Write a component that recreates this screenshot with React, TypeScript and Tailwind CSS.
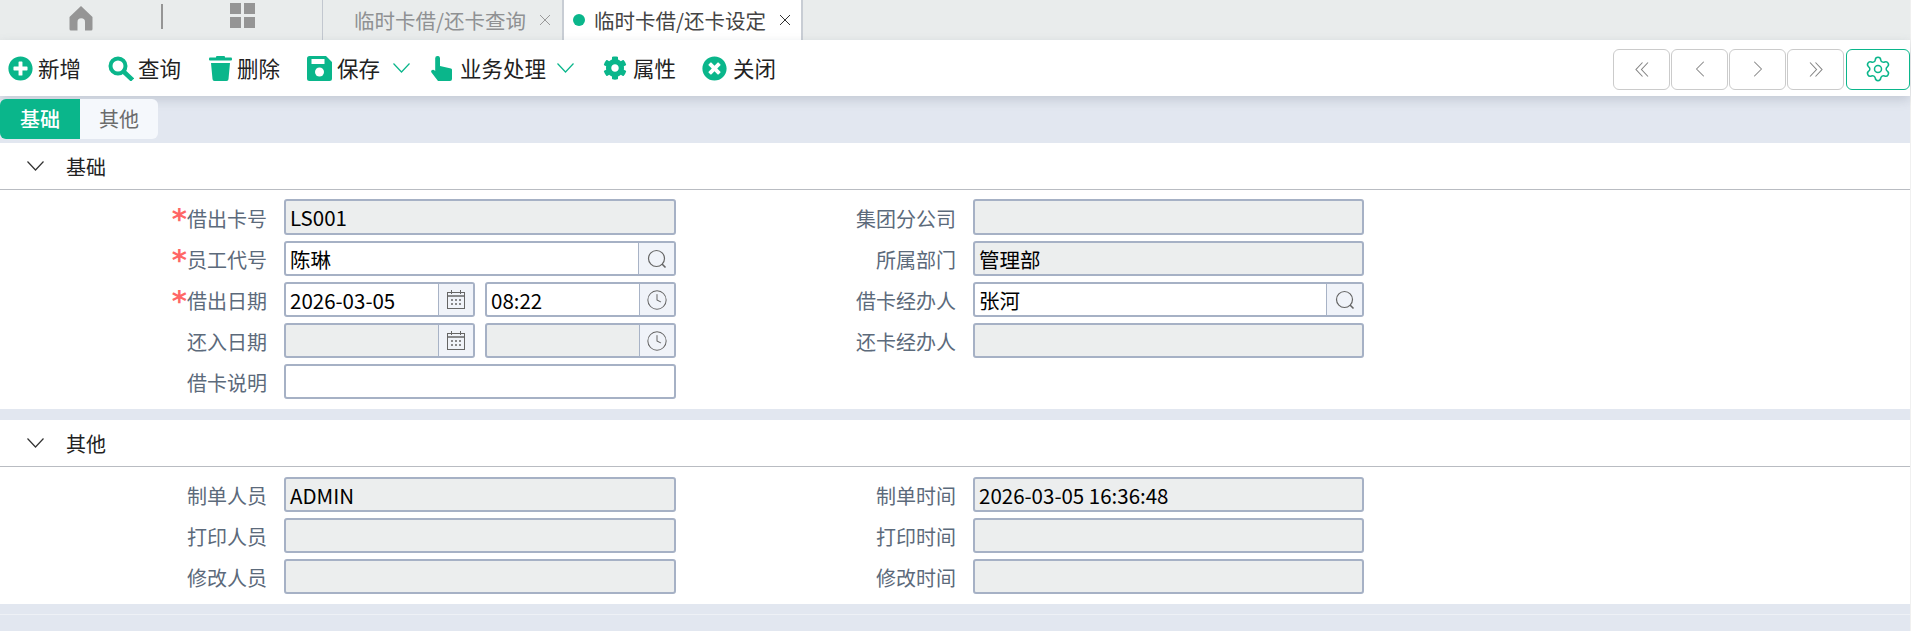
import { ChevronLeft, ChevronRight, Clock, Settings } from 'lucide-react';
import type { ReactNode } from 'react';
import { FaCog, FaPlusCircle, FaTimesCircle } from 'react-icons/fa';

function HomeIcon() {
    return (
        <svg width="24" height="26" viewBox="0 0 24 26" fill="#959595">
            <path d="M12 1 L23.5 12 V24 a1.5 1.5 0 0 1 -1.5 1.5 H16 V17 a3.5 3.5 0 0 0 -7.5 0 V25.5 H2 a1.5 1.5 0 0 1 -1.5 -1.5 V12 Z" />
        </svg>
    );
}

function GridIcon() {
    return (
        <svg width="25" height="25" viewBox="0 0 25 25" fill="#959595">
            <rect x="0" y="0" width="11" height="11" />
            <rect x="14" y="0" width="11" height="11" />
            <rect x="0" y="14" width="11" height="11" />
            <rect x="14" y="14" width="11" height="11" />
        </svg>
    );
}

function SearchIcon() {
    return (
        <svg width="26" height="25" viewBox="0 0 26 25" fill="none" stroke="#0ab68b" strokeWidth="4">
            <circle cx="10" cy="10" r="7.5" />
            <path d="M15.5 15.5 L24.5 24" strokeWidth="4.5" />
        </svg>
    );
}

function TrashIcon() {
    return (
        <svg width="23" height="25" viewBox="0 0 23 25" fill="#0ab68b">
            <rect x="0" y="1.5" width="23" height="3" rx="1" />
            <rect x="7" y="0" width="9" height="3" rx="1" />
            <path d="M2 7 H21 L19.5 23 a2 2 0 0 1 -2 2 H5.5 a2 2 0 0 1 -2 -2 Z" />
        </svg>
    );
}

function SaveIcon() {
    return (
        <svg width="25" height="25" viewBox="0 0 25 25">
            <path d="M2.5 0 H19 L25 6 V22.5 a2.5 2.5 0 0 1 -2.5 2.5 H2.5 a2.5 2.5 0 0 1 -2.5 -2.5 V2.5 a2.5 2.5 0 0 1 2.5 -2.5 Z" fill="#0ab68b" />
            <rect x="4.5" y="3" width="13" height="5" fill="#fff" />
            <circle cx="12.5" cy="16" r="4.5" fill="#fff" />
        </svg>
    );
}

function HandIcon() {
    return (
        <svg width="21" height="25" viewBox="0 0 21 25" fill="#0ab68b">
            <path d="M6.5 0 a2.3 2.3 0 0 1 2.5 2.3 V10 L20 12.5 a1.5 1.5 0 0 1 1 1.5 V23 a2 2 0 0 1 -2 2 H7 L0.5 16.5 a1.8 1.8 0 0 1 2.5 -2.5 L4.2 15 V2.3 A2.3 2.3 0 0 1 6.5 0 Z" />
        </svg>
    );
}

function SmallChevron({ color = '#0ab68b' }: { color?: string }) {
    return (
        <svg width="17" height="10" viewBox="0 0 17 10" fill="none" stroke={color} strokeWidth="1.2">
            <path d="M0.5 0.5 L8.5 9 L16.5 0.5" />
        </svg>
    );
}

function DoubleChevron({ flip }: { flip?: boolean }) {
    return (
        <svg width="14" height="15" viewBox="0 0 14 15" fill="none" stroke="currentColor" strokeWidth="1.1" className={flip ? 'rotate-180' : ''}>
            <path d="M7.5 0.5 L1 7.5 L7.5 14.5 M13 0.5 L6.5 7.5 L13 14.5" />
        </svg>
    );
}

function LookupIcon() {
    return (
        <svg width="20" height="20" viewBox="0 0 20 20" fill="none" stroke="#666" strokeWidth="1.2">
            <circle cx="9.5" cy="9.5" r="8" />
            <path d="M15 15 L18.5 18.5" strokeWidth="1.6" />
        </svg>
    );
}

function CalendarIcon() {
    return (
        <svg width="18" height="19" viewBox="0 0 18 19" fill="none" stroke="#666" strokeWidth="1">
            <rect x="0.5" y="2.5" width="17" height="16" />
            <path d="M0.5 6 H17.5" strokeWidth="1.6" />
            <path d="M4.5 0 V4 M13.5 0 V4" />
            <path d="M4 10 H6 M8 10 H10 M12 10 H14 M4 14 H6 M8 14 H10 M12 14 H14" strokeWidth="1.4" />
        </svg>
    );
}

function Addon({ children, className }: { children: ReactNode; className: string }) {
    return (
        <div className={`flex h-full shrink-0 items-center justify-center border-l border-[#a8b3c6] bg-[#f0f3f9] ${className}`}>
            {children}
        </div>
    );
}

function Field({ value, disabled, className, addon }: { value?: string; disabled?: boolean; className: string; addon?: ReactNode }) {
    return (
        <div className={`flex h-full items-center overflow-hidden rounded-[3px] border-2 border-[#a6b1c5] ${disabled ? 'bg-[#eceeee]' : 'bg-white'} ${className}`}>
            <div className="min-w-0 flex-1 pt-px pl-[4px] text-[20.5px] leading-none text-black">{value}</div>
            {addon}
        </div>
    );
}

function Label({ text, required, className }: { text: string; required?: boolean; className: string }) {
    return (
        <div className={`flex shrink-0 items-center justify-end pt-[3px] text-[20px] text-[#5c6a7b] ${className}`}>
            <span className="relative">
                {required && <span className="absolute top-[-3px] right-full font-['DejaVu_Sans',sans-serif] text-[29px] leading-[36px] font-bold text-[#ff6666]">*</span>}
                {text}
            </span>
        </div>
    );
}

function SectionHead({ title }: { title: string }) {
    return (
        <div className="flex h-[47px] items-center border-b border-[#b9bcc2] pl-[27px] text-[20px] text-[#222]">
            <SmallChevron color="#333" />
            <span className="ml-[22px] pt-px">{title}</span>
        </div>
    );
}

function NavButton({ children }: { children: ReactNode }) {
    return (
        <div className="flex h-[41px] w-[57px] items-center justify-center rounded-[6px] border border-[#cbcbcb] bg-white text-[#858585]">
            {children}
        </div>
    );
}

export default function App() {
    return (
        <div className="h-[631px] w-full overflow-hidden bg-[#f0f0f0] pr-px font-['Noto_Sans_CJK_SC',sans-serif]">
            <div className="h-full bg-[#e2e7f0]">
                {/* Tab bar */}
                <div className="flex h-[40px] items-stretch bg-[#e9ecec]">
                    <div className="flex w-[161px] items-center justify-center pb-[4px]">
                        <HomeIcon />
                    </div>
                    <div className="mt-[4px] h-[25px] w-[2px] bg-[#959595]" />
                    <div className="flex w-[159px] items-center justify-center pb-[9px]">
                        <GridIcon />
                    </div>
                    <div className="flex w-[240px] items-center border-l border-[#c2c7cf] pl-[31px] text-[20.5px] text-[#8f9193]">
                        <span>临时卡借/还卡查询</span>
                        <span className="ml-[13px] text-[#9a9a9a]">
                            <svg width="12" height="12" viewBox="0 0 12 12" stroke="currentColor" strokeWidth="1"><path d="M1 1 L11 11 M11 1 L1 11" /></svg>
                        </span>
                    </div>
                    <div className="flex w-[241px] items-center border-x-2 border-x-[#c8cdd4] bg-white pl-[9px] text-[20.5px] text-[#444]">
                        <span className="h-[12px] w-[12px] rounded-full bg-[#0ab68b]" />
                        <span className="ml-[9px]">临时卡借/还卡设定</span>
                        <span className="ml-[13px] text-[#333]">
                            <svg width="12" height="12" viewBox="0 0 12 12" stroke="currentColor" strokeWidth="1"><path d="M1 1 L11 11 M11 1 L1 11" /></svg>
                        </span>
                    </div>
                </div>

                {/* Toolbar */}
                <div className="relative z-10 flex h-[56px] items-center bg-white pl-[8px] text-[21.5px] text-[#222] shadow-[0_4px_10px_rgba(90,100,120,0.22)]">
                    <div className="flex items-center gap-[5px]"><FaPlusCircle size={25} color="#0ab68b" />新增</div>
                    <div className="ml-[27px] flex items-center gap-[4px]"><SearchIcon />查询</div>
                    <div className="ml-[28px] flex items-center gap-[5px]"><TrashIcon />删除</div>
                    <div className="ml-[27px] flex items-center gap-[5px]"><SaveIcon />保存</div>
                    <div className="ml-[13px]"><SmallChevron /></div>
                    <div className="ml-[21px] flex items-center gap-[8px]"><HandIcon />业务处理</div>
                    <div className="ml-[11px]"><SmallChevron /></div>
                    <div className="ml-[29px] flex items-center gap-[6px]"><FaCog size={24} color="#0ab68b" />属性</div>
                    <div className="ml-[26px] flex items-center gap-[6px]"><FaTimesCircle size={25} color="#0ab68b" />关闭</div>

                    <div className="mt-[2px] ml-auto flex items-center gap-[1px]">
                        <NavButton><DoubleChevron /></NavButton>
                        <NavButton><ChevronLeft size={28} strokeWidth={0.9} /></NavButton>
                        <NavButton><ChevronRight size={28} strokeWidth={0.9} /></NavButton>
                        <NavButton><DoubleChevron flip /></NavButton>
                        <div className="ml-[1px] flex h-[41px] w-[64px] items-center justify-center rounded-[6px] border border-[#0ab68b] bg-white text-[#0ab68b]">
                            <Settings size={28} strokeWidth={1.3} />
                        </div>
                    </div>
                </div>

                {/* Sub tabs */}
                <div className="relative z-20 flex h-[47px] pt-[3px] text-[20px]">
                    <div className="flex h-[40px] w-[80px] items-center justify-center rounded-l-[6px] bg-[#0ab68b] font-medium text-white">基础</div>
                    <div className="flex h-[40px] w-[78px] items-center justify-center rounded-r-[6px] bg-[#f5f8fc] text-[#6b6b6b]">其他</div>
                </div>

                {/* 基础 */}
                <div className="bg-white">
                    <SectionHead title="基础" />
                    <div className="flex flex-col gap-[6px] pt-[9px] pb-[10px]">
                        <div className="flex h-[36px]">
                            <Label text="借出卡号" required className="w-[267px]" />
                            <Field value="LS001" disabled className="ml-[17px] w-[392px]" />
                            <Label text="集团分公司" className="w-[280px]" />
                            <Field disabled className="ml-[17px] w-[391px]" />
                        </div>
                        <div className="flex h-[35px]">
                            <Label text="员工代号" required className="w-[267px]" />
                            <Field value="陈琳" className="ml-[17px] w-[392px]" addon={<Addon className="w-[36px]"><LookupIcon /></Addon>} />
                            <Label text="所属部门" className="w-[280px]" />
                            <Field value="管理部" disabled className="ml-[17px] w-[391px]" />
                        </div>
                        <div className="flex h-[35px]">
                            <Label text="借出日期" required className="w-[267px]" />
                            <Field value="2026-03-05" className="ml-[17px] w-[191px]" addon={<Addon className="w-[35px]"><CalendarIcon /></Addon>} />
                            <Field value="08:22" className="ml-[10px] w-[191px]" addon={<Addon className="w-[35px]"><Clock size={22} strokeWidth={1.1} color="#666" /></Addon>} />
                            <Label text="借卡经办人" className="w-[280px]" />
                            <Field value="张河" className="ml-[17px] w-[391px]" addon={<Addon className="w-[36px]"><LookupIcon /></Addon>} />
                        </div>
                        <div className="flex h-[35px]">
                            <Label text="还入日期" className="w-[267px]" />
                            <Field disabled className="ml-[17px] w-[191px]" addon={<Addon className="w-[35px]"><CalendarIcon /></Addon>} />
                            <Field disabled className="ml-[10px] w-[191px]" addon={<Addon className="w-[35px]"><Clock size={22} strokeWidth={1.1} color="#666" /></Addon>} />
                            <Label text="还卡经办人" className="w-[280px]" />
                            <Field disabled className="ml-[17px] w-[391px]" />
                        </div>
                        <div className="flex h-[35px]">
                            <Label text="借卡说明" className="w-[267px]" />
                            <Field className="ml-[17px] w-[392px]" />
                        </div>
                    </div>
                </div>

                <div className="h-[11px]" />

                {/* 其他 */}
                <div className="bg-white">
                    <SectionHead title="其他" />
                    <div className="flex flex-col gap-[6px] pt-[10px] pb-[10px]">
                        <div className="flex h-[35px]">
                            <Label text="制单人员" className="w-[267px]" />
                            <Field value="ADMIN" disabled className="ml-[17px] w-[392px]" />
                            <Label text="制单时间" className="w-[280px]" />
                            <Field value="2026-03-05 16:36:48" disabled className="ml-[17px] w-[391px]" />
                        </div>
                        <div className="flex h-[35px]">
                            <Label text="打印人员" className="w-[267px]" />
                            <Field disabled className="ml-[17px] w-[392px]" />
                            <Label text="打印时间" className="w-[280px]" />
                            <Field disabled className="ml-[17px] w-[391px]" />
                        </div>
                        <div className="flex h-[35px]">
                            <Label text="修改人员" className="w-[267px]" />
                            <Field disabled className="ml-[17px] w-[392px]" />
                            <Label text="修改时间" className="w-[280px]" />
                            <Field disabled className="ml-[17px] w-[391px]" />
                        </div>
                    </div>
                </div>

                <div className="mt-[10px] h-px bg-[#eef1f6]" />
            </div>
        </div>
    );
}
